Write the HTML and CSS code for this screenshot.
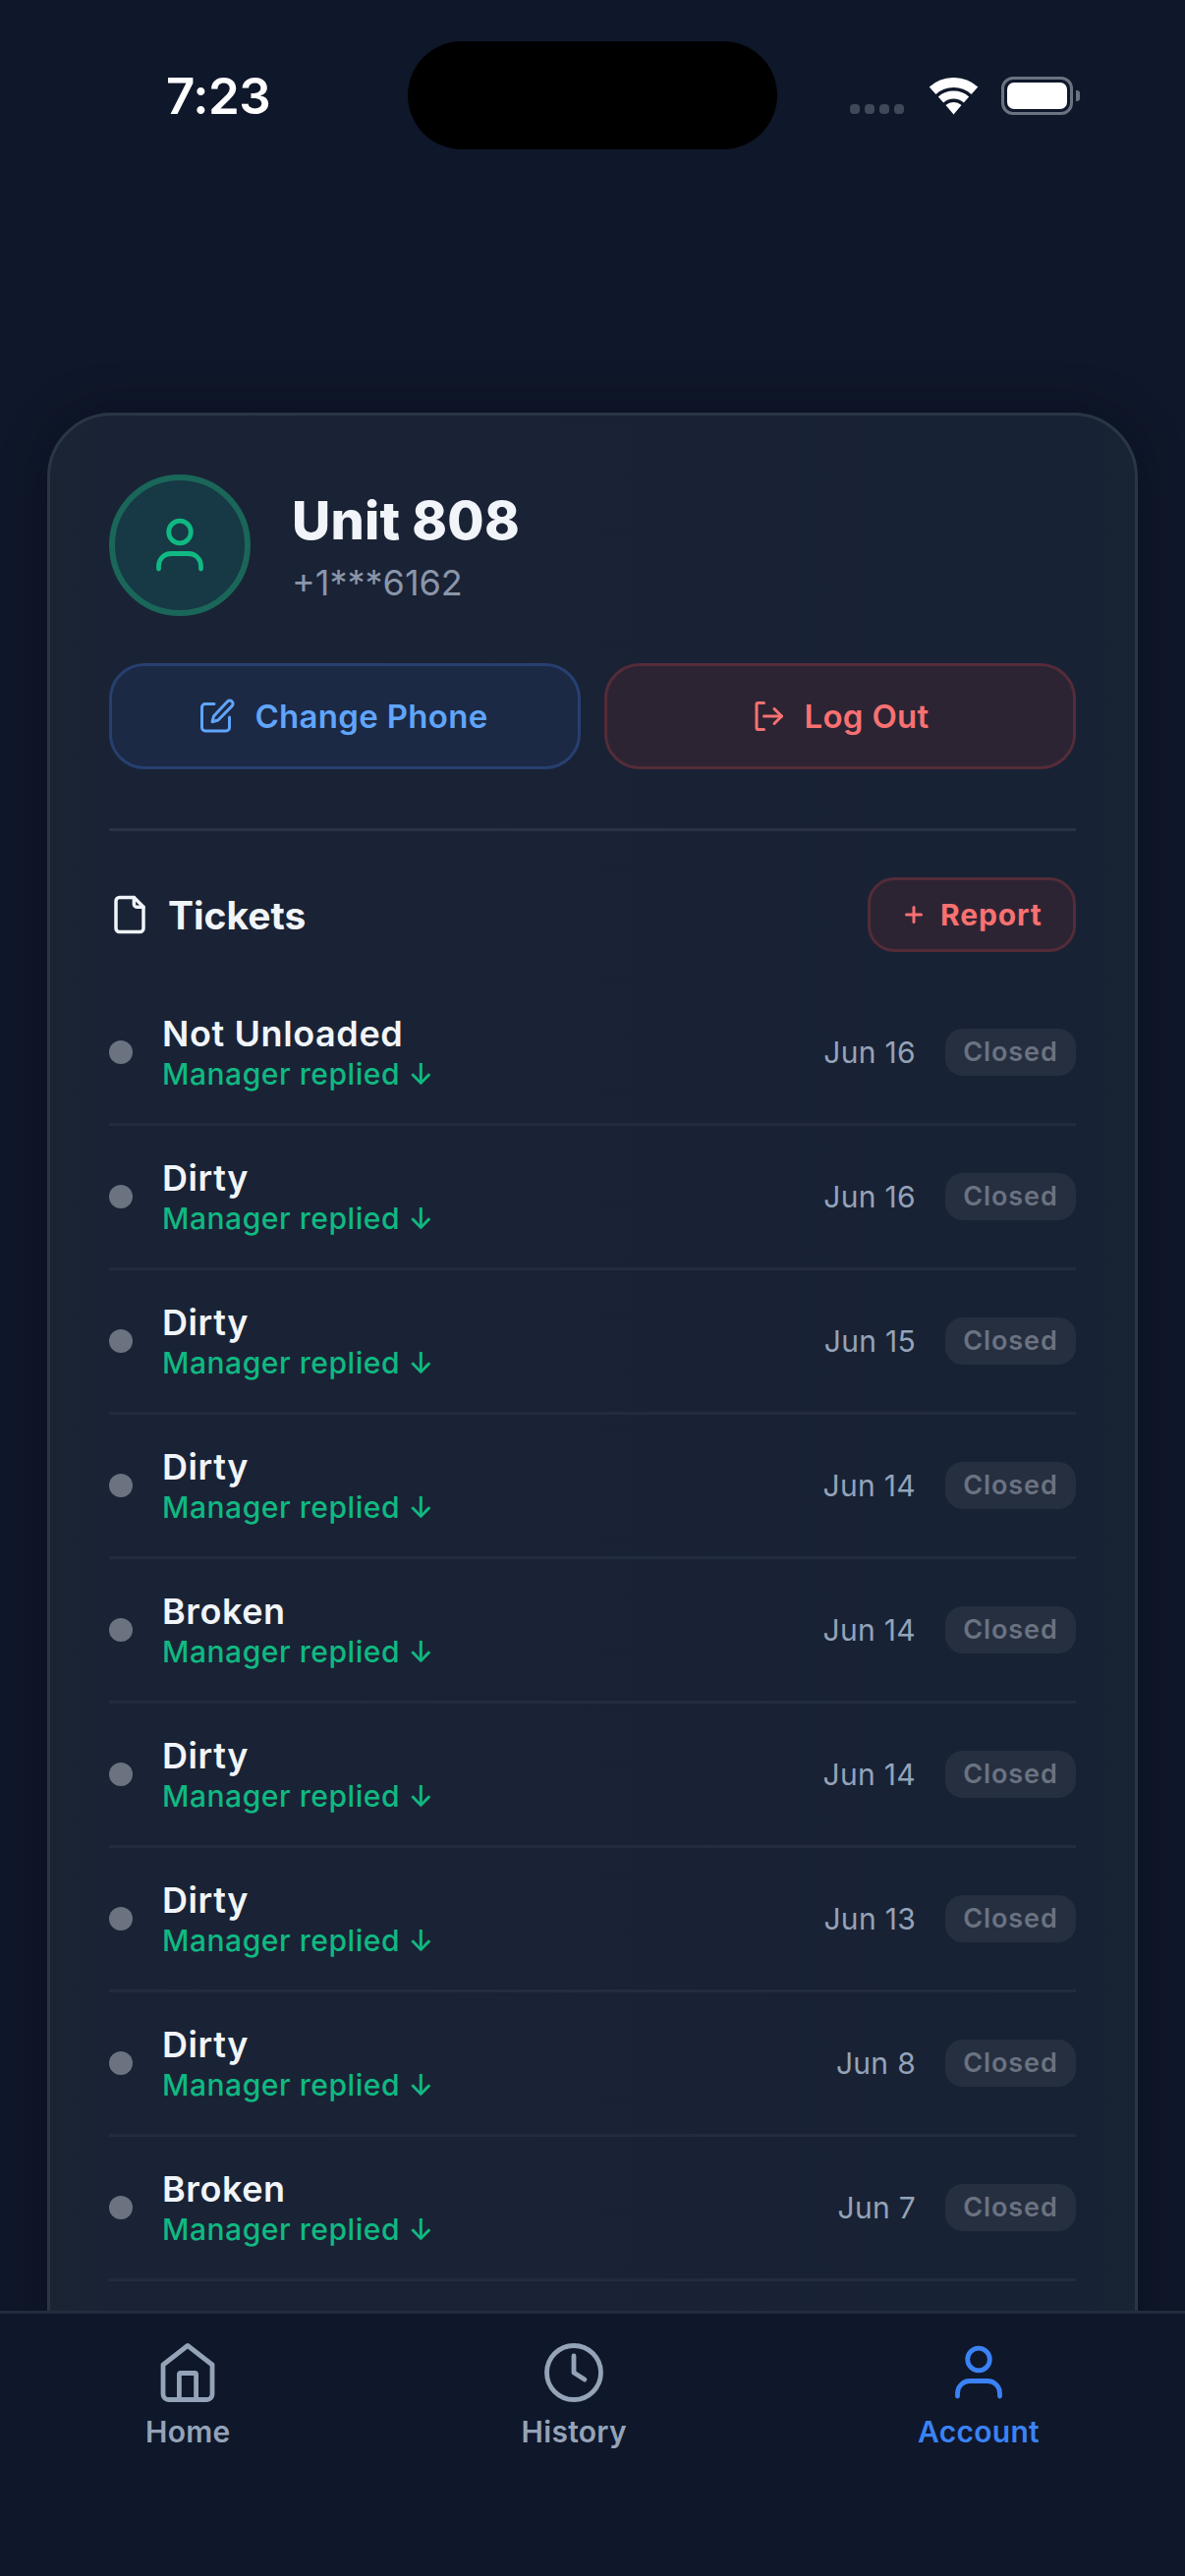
FILE: index.html
```html
<!DOCTYPE html>
<html lang="en">
<head>
  <meta charset="UTF-8">
  <meta name="viewport" content="width=device-width, initial-scale=1.0">
  <title>Account</title>
  <link rel="stylesheet" href="styles.css">
</head>
<body>
  <div class="status">
    <div class="time">7:23</div>
    <div class="island"></div>
    <div class="signal"><i></i><i></i><i></i><i></i></div>
    <svg class="wifi" width="51" height="38" viewBox="0 0 51 38">
      <path d="M4.1 13.2A32 32 0 0 1 46.9 13.2" fill="none" stroke="#fff" stroke-width="10"/>
      <path d="M12.5 22.5A19.5 19.5 0 0 1 38.5 22.5" fill="none" stroke="#fff" stroke-width="8"/>
      <path d="M25.5 37.5L17.5 28A12 12 0 0 1 33.5 28Z" fill="#fff"/>
    </svg>
    <div class="battery"><div class="battery-fill"></div></div>
    <div class="battery-nub"></div>
  </div>

  <main class="content">
    <section class="card">
      <div class="profile">
        <div class="avatar">
          <svg width="60" height="60" viewBox="0 0 60 60" fill="none" stroke="#10b981" stroke-width="4.8" stroke-linecap="round">
            <circle cx="30" cy="16.5" r="11.3"/>
            <path d="M8.5 54v-3a12.5 12.5 0 0 1 12.5-12.5h18a12.5 12.5 0 0 1 12.5 12.5v3"/>
          </svg>
        </div>
        <div>
          <div class="name">Unit 808</div>
          <div class="phone">+1***6162</div>
        </div>
      </div>

      <div class="actions">
        <button class="btn btn-blue">
          <svg class="btn-icon" width="36" height="36" viewBox="0 0 36 36" fill="none" stroke="#60a5fa" stroke-width="3" stroke-linecap="round" stroke-linejoin="round">
            <path d="M13 5.5H4a3.5 3.5 0 0 0-3.5 3.5V29.5a3.5 3.5 0 0 0 3.5 3.5H25a3.5 3.5 0 0 0 3.5-3.5V19"/>
            <path d="M26.5 3a3.2 3.2 0 0 1 4.6 4.6L17 22l-6 1.7 1.7-6z"/>
          </svg>
          Change Phone
        </button>
        <button class="btn btn-red">
          <svg width="36" height="36" viewBox="0 0 24 24" fill="none" stroke="#f87171" stroke-width="2" stroke-linecap="round" stroke-linejoin="round">
            <path d="M9 21H5a1 1 0 0 1-1-1V4a1 1 0 0 1 1-1h4"/>
            <path d="M16 17l5-5-5-5"/>
            <path d="M21 12H9"/>
          </svg>
          Log Out
        </button>
      </div>

      <div class="divider"></div>

      <div class="tickets-head">
        <div class="tickets-title">
          <svg width="42" height="42" viewBox="0 0 24 24" fill="none" stroke="#f1f5f9" stroke-width="2" stroke-linecap="round" stroke-linejoin="round">
            <path d="M14.5 2H6a2 2 0 0 0-2 2v16a2 2 0 0 0 2 2h12a2 2 0 0 0 2-2V7.5Z"/>
            <path d="M14.5 2v4a1.5 1.5 0 0 0 1.5 1.5h4"/>
          </svg>
          Tickets
        </div>
        <button class="report">
          <svg width="18" height="18" viewBox="0 0 18 18" stroke="#f87171" stroke-width="3" stroke-linecap="round">
            <path d="M9 1.5v15M1.5 9h15"/>
          </svg>
          Report
        </button>
      </div>

      <div class="ticket">
        <span class="dot"></span>
        <div class="ticket-text"><div class="ticket-name">Not Unloaded</div><div class="ticket-sub">Manager replied ↓</div></div>
        <span class="date">Jun 16</span><span class="badge">Closed</span>
      </div>
      <div class="ticket">
        <span class="dot"></span>
        <div class="ticket-text"><div class="ticket-name">Dirty</div><div class="ticket-sub">Manager replied ↓</div></div>
        <span class="date">Jun 16</span><span class="badge">Closed</span>
      </div>
      <div class="ticket">
        <span class="dot"></span>
        <div class="ticket-text"><div class="ticket-name">Dirty</div><div class="ticket-sub">Manager replied ↓</div></div>
        <span class="date">Jun 15</span><span class="badge">Closed</span>
      </div>
      <div class="ticket">
        <span class="dot"></span>
        <div class="ticket-text"><div class="ticket-name">Dirty</div><div class="ticket-sub">Manager replied ↓</div></div>
        <span class="date">Jun 14</span><span class="badge">Closed</span>
      </div>
      <div class="ticket">
        <span class="dot"></span>
        <div class="ticket-text"><div class="ticket-name">Broken</div><div class="ticket-sub">Manager replied ↓</div></div>
        <span class="date">Jun 14</span><span class="badge">Closed</span>
      </div>
      <div class="ticket">
        <span class="dot"></span>
        <div class="ticket-text"><div class="ticket-name">Dirty</div><div class="ticket-sub">Manager replied ↓</div></div>
        <span class="date">Jun 14</span><span class="badge">Closed</span>
      </div>
      <div class="ticket">
        <span class="dot"></span>
        <div class="ticket-text"><div class="ticket-name">Dirty</div><div class="ticket-sub">Manager replied ↓</div></div>
        <span class="date">Jun 13</span><span class="badge">Closed</span>
      </div>
      <div class="ticket">
        <span class="dot"></span>
        <div class="ticket-text"><div class="ticket-name">Dirty</div><div class="ticket-sub">Manager replied ↓</div></div>
        <span class="date">Jun 8</span><span class="badge">Closed</span>
      </div>
      <div class="ticket">
        <span class="dot"></span>
        <div class="ticket-text"><div class="ticket-name">Broken</div><div class="ticket-sub">Manager replied ↓</div></div>
        <span class="date">Jun 7</span><span class="badge">Closed</span>
      </div>
    </section>
  </main>

  <nav class="tabbar">
    <div class="tab">
      <svg width="60" height="60" viewBox="0 0 60 60" fill="none" stroke="#94a3b8" stroke-width="4.8" stroke-linecap="round" stroke-linejoin="round">
        <path d="M30 2.5L55 22V52a5.5 5.5 0 0 1-5.5 5.5h-39A5.5 5.5 0 0 1 5 52V22Z"/>
        <path d="M21.4 57.5V32a1.5 1.5 0 0 1 1.5-1.5H37.1a1.5 1.5 0 0 1 1.5 1.5V57.5"/>
      </svg>
      <span>Home</span>
    </div>
    <div class="tab">
      <svg width="60" height="60" viewBox="0 0 60 60" fill="none" stroke="#94a3b8" stroke-width="4.8" stroke-linecap="round" stroke-linejoin="round">
        <circle cx="30" cy="30" r="27.5"/>
        <path d="M30 13V30L41 37"/>
      </svg>
      <span>History</span>
    </div>
    <div class="tab tab-active">
      <svg width="60" height="60" viewBox="0 0 60 60" fill="none" stroke="#3b82f6" stroke-width="4.8" stroke-linecap="round">
        <circle cx="30" cy="16.5" r="11.3"/>
        <path d="M8.5 54v-3a12.5 12.5 0 0 1 12.5-12.5h18a12.5 12.5 0 0 1 12.5 12.5v3"/>
      </svg>
      <span>Account</span>
    </div>
  </nav>
</body>
</html>
```

FILE: styles.css
```css
* {
  box-sizing: border-box;
}
html, body {
  margin: 0;
  height: 100%;
}
body {
  width: 1206px;
  height: 2622px;
  display: flex;
  flex-direction: column;
  overflow: hidden;
  background-color: #0f172a;
  color: #f1f5f9;
  font-family: Inter, "Noto Sans", sans-serif;
}

/* status bar */
.status {
  flex-shrink: 0;
  height: 194px;
  padding: 42px 0 0 169px;
  display: flex;
  align-items: flex-start;
}
.time {
  width: 246px;
  height: 110px;
  line-height: 112px;
  font-size: 51px;
  font-weight: 600;
  letter-spacing: -0.5px;
  color: #fff;
}
.island {
  width: 376px;
  height: 110px;
  border-radius: 55px;
  background-color: #000;
}
.signal {
  margin: 64px 0 0 74px;
  width: 80px;
  display: flex;
  gap: 5px;
}
.signal i {
  width: 10px;
  height: 10px;
  border-radius: 4px;
  background-color: #3f4858;
}
.wifi {
  margin-top: 37px;
}
.battery {
  margin: 36px 0 0 23px;
  width: 73px;
  height: 39px;
  padding: 3px;
  border: 3px solid #6b7280;
  border-radius: 12px;
}
.battery-fill {
  height: 100%;
  border-radius: 7px;
  background-color: #fff;
}
.battery-nub {
  margin: 50px 0 0 3px;
  width: 4px;
  height: 11px;
  border-radius: 0 3px 3px 0;
  background-color: #6b7280;
}

/* page content */
.content {
  flex: 1;
  min-height: 0;
  padding: 226px 48px 0;
  overflow: hidden;
}
.card {
  padding: 60px 60px 150px;
  border: 3px solid #2a3546;
  border-radius: 66px;
  background: linear-gradient(90deg, #1a2433 0, #1a2335 5%, #1a2235 40%, #182235 95%, #182333 100%);
  box-shadow: 0 0 50px rgba(0, 0, 20, 0.3);
}
.profile {
  display: flex;
  align-items: center;
  gap: 42px;
}
.avatar {
  width: 144px;
  height: 144px;
  display: flex;
  align-items: center;
  justify-content: center;
  border: 6px solid #1a6659;
  border-radius: 50%;
  background-color: #173845;
}
.name {
  font-size: 54px;
  line-height: 66px;
  font-weight: 800;
  letter-spacing: 0.2px;
}
.phone {
  margin-top: 9px;
  font-size: 36px;
  line-height: 42px;
  color: #8a96aa;
}
.actions {
  margin-top: 48px;
  display: flex;
  gap: 24px;
}
.btn {
  flex: 1;
  height: 108px;
  display: flex;
  align-items: center;
  justify-content: center;
  gap: 18px;
  border-radius: 36px;
  font-family: inherit;
  font-size: 33px;
  font-weight: 600;
  letter-spacing: 0.3px;
}
.btn-icon {
  overflow: visible;
}
.btn-blue {
  border: 3px solid #264070;
  background-color: #1c2945;
  color: #60a5fa;
}
.btn-red {
  border: 3px solid #542c38;
  background-color: #2d2433;
  color: #f87171;
}
.divider {
  margin-top: 60px;
  height: 3px;
  background-color: #2a3344;
}

/* tickets */
.tickets-head {
  margin-top: 47px;
  display: flex;
  align-items: center;
  justify-content: space-between;
}
.tickets-title {
  display: flex;
  align-items: center;
  gap: 18px;
  font-size: 39px;
  font-weight: 700;
}
.report {
  width: 212px;
  height: 76px;
  padding: 0 0 0 35px;
  display: flex;
  align-items: center;
  gap: 18px;
  border: 3px solid #542c38;
  border-radius: 27px;
  background-color: #2d2433;
  color: #f87171;
  font-family: inherit;
  font-size: 30px;
  font-weight: 700;
  letter-spacing: 0.9px;
}
.tickets-head + .ticket {
  margin-top: 30px;
}
.ticket {
  height: 147px;
  display: flex;
  align-items: center;
  border-bottom: 3px solid #222c3e;
}
.dot {
  width: 24px;
  height: 24px;
  flex-shrink: 0;
  border-radius: 50%;
  background-color: #6b7280;
}
.ticket-text {
  flex: 1;
  margin-left: 30px;
}
.ticket-name {
  font-size: 36px;
  line-height: 44px;
  font-weight: 600;
  letter-spacing: 0.6px;
}
.ticket-sub {
  font-size: 30px;
  line-height: 38px;
  font-weight: 500;
  letter-spacing: 0.55px;
  color: #10b981;
}
.date {
  font-size: 30px;
  letter-spacing: 0.3px;
  color: #94a3b8;
}
.badge {
  margin-left: 30px;
  height: 48px;
  width: 133px;
  border-radius: 18px;
  background-color: #252f40;
  color: #6b7280;
  text-align: center;
  font-size: 27px;
  line-height: 48px;
  font-weight: 600;
  letter-spacing: 0.9px;
}

/* bottom tabs */
.tabbar {
  flex-shrink: 0;
  height: 270px;
  padding-top: 30px;
  display: flex;
  justify-content: space-around;
  align-items: flex-start;
  border-top: 3px solid #232c3d;
  background-color: #0f172a;
}
.tab {
  display: flex;
  flex-direction: column;
  align-items: center;
  gap: 12px;
  font-size: 30px;
  line-height: 36px;
  font-weight: 600;
  letter-spacing: 0.3px;
  color: #94a3b8;
}
.tab-active {
  color: #3b82f6;
}
```
